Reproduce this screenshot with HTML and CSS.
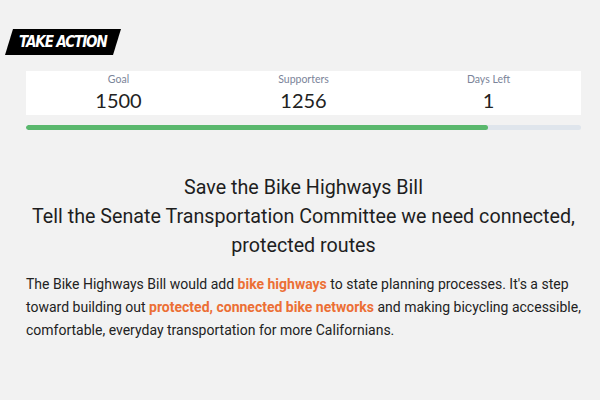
FILE: index.html
```html
<!DOCTYPE html>
<html>
<head>
<meta charset="utf-8">
<link rel="stylesheet" href="styles.css">
</head>
<body>
<div class="page">
  <div class="badge"><span class="badge-text">TAKE ACTION</span></div>
  <div class="content">
    <div class="stats">
      <div class="stat"><div class="stat-label">Goal</div><div class="stat-value">1500</div></div>
      <div class="stat"><div class="stat-label">Supporters</div><div class="stat-value">1256</div></div>
      <div class="stat"><div class="stat-label">Days Left</div><div class="stat-value">1</div></div>
    </div>
    <div class="progress"><div class="progress-fill" style="width:83.2%"></div></div>
    <h1 class="title">Save the Bike Highways Bill<br>Tell the Senate Transportation Committee we need connected, protected routes</h1>
    <p class="body">The Bike Highways Bill would add <strong class="hl">bike highways</strong> to state planning processes. It's a step toward building out <strong class="hl">protected, connected bike networks</strong> and making bicycling accessible, comfortable, everyday transportation for more Californians.</p>
  </div>
</div>
</body>
</html>
```
FILE: styles.css
```css
html, body {
  margin: 0;
  padding: 0;
  background: #f2f2f2;
}
.page {
  width: 600px;
  height: 400px;
  padding-top: 29px;
  box-sizing: border-box;
  font-family: Roboto, "Noto Sans", sans-serif;
  color: #222;
}
.badge {
  margin-left: 9px;
  width: 108px;
  height: 26px;
  background: #000;
  transform: skewX(-17deg);
  display: flex;
  align-items: center;
  justify-content: center;
}
.badge-text {
  transform: skewX(17deg);
  color: #fff;
  font-family: "DejaVu Sans Condensed", "DejaVu Sans", sans-serif;
  font-stretch: condensed;
  font-weight: bold;
  font-style: italic;
  font-size: 15px;
  letter-spacing: -1.1px;
}
.content {
  margin: 16px 19px 0 26px;
}
.stats {
  background: #fff;
  display: grid;
  grid-template-columns: 1fr 1fr 1fr;
  height: 44px;
  padding-top: 1px;
  box-sizing: border-box;
}
.stat {
  text-align: center;
  font-family: Lato, sans-serif;
}
.stat-label {
  font-size: 10.5px;
  color: #7b8499;
  line-height: 14px;
}
.stat-value {
  margin-top: 2px;
  font-size: 20px;
  color: #222;
  line-height: 24px;
}
.progress {
  margin-top: 10px;
  height: 5px;
  border-radius: 3px;
  background: #dfe5ec;
  overflow: hidden;
}
.progress-fill {
  height: 100%;
  background: #5ab86d;
  border-radius: 3px;
}
.title {
  margin: 43px 0 0;
  font-size: 19.7px;
  font-weight: 400;
  line-height: 29px;
  text-align: center;
  color: #1e1e1e;
}
.body {
  margin: 13px 0 0;
  font-size: 14px;
  line-height: 23px;
  color: #222;
}
.hl {
  color: #ec6f35;
  font-weight: 700;
}
```
